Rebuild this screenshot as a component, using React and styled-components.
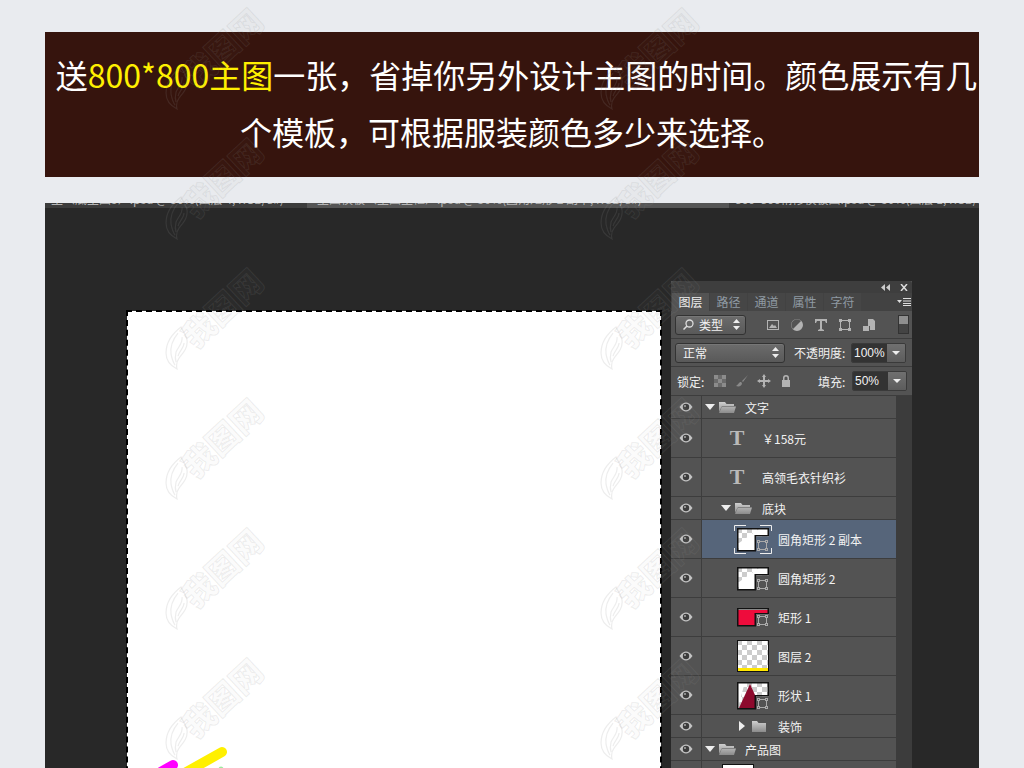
import React from 'react';
import styled, { createGlobalStyle } from 'styled-components';

const GlobalStyle = createGlobalStyle`
  html, body {
    margin: 0;
    height: 768px;
    overflow: hidden;
    background: #e9ebef;
  }
`;

const cjk = `"Noto Sans CJK SC", "Noto Sans", sans-serif`;

const Page = styled.div`
  position: relative;
  width: 1024px;
  height: 768px;
  overflow: hidden;
  padding: 32px 45px 0;
  box-sizing: border-box;
  font-family: ${cjk};
`;

const Banner = styled.div`
  height: 145px;
  background: #36140d;
  color: #fff;
  font-size: 32px;
  line-height: 57px;
  text-align: center;
  text-indent: 9px;
  padding-top: 14px;
  box-sizing: border-box;
`;

const Yellow = styled.span`
  color: #fff000;
`;

const Workspace = styled.div`
  margin-top: 26px;
  height: 565px;
  background: #282828;
  overflow: hidden;
`;

const TabStrip = styled.div`
  display: flex;
  height: 5px;
  background: #3c3c3c;
  overflow: hidden;
  font-size: 12px;
  line-height: 12px;
  color: #b5b5b5;
  white-space: nowrap;
`;

const DocTab = styled.div`
  width: ${(p) => p.$w}px;
  flex: none;
  background: ${(p) => (p.$active ? '#555' : 'transparent')};
  padding-left: ${(p) => p.$pad}px;
  box-sizing: border-box;
  overflow: hidden;
  margin-top: -10px;
  height: 15px;
`;

const Stage = styled.div`
  display: flex;
  align-items: flex-start;
  padding: 73px 0 0 82px;
`;

const Canvas = styled.div`
  position: relative;
  width: 534px;
  height: 500px;
  margin-top: 30px;
  background: #fff;
  flex: none;
  outline: 2px dashed #000;
  outline-offset: -1px;
`;

const Strokes = styled.svg`
  position: absolute;
  left: 0;
  top: 0;
`;

const Panel = styled.div`
  width: 241px;
  margin-left: 10px;
  flex: none;
  background: #535353;
  color: #eee;
  font-size: 12px;
`;

const PanelTop = styled.div`
  height: 12px;
  background: #3e3e3e;
  border-radius: 3px 3px 0 0;
  display: flex;
  justify-content: flex-end;
  align-items: center;
  gap: 10px;
  padding-right: 4px;
`;

const TabBar = styled.div`
  height: 18px;
  background: #424242;
  display: flex;
  align-items: stretch;
  padding-left: 1px;
`;

const PanelTab = styled.div`
  width: 37px;
  margin-right: 1px;
  text-align: center;
  line-height: 18px;
  font-size: 12px;
  color: ${(p) => (p.$active ? '#f0f0f0' : '#8f9aa3')};
  background: ${(p) => (p.$active ? '#535353' : '#464646')};
`;

const MenuIcon = styled.svg`
  margin-left: auto;
  margin-right: 1px;
  align-self: center;
`;

const ControlRow = styled.div`
  height: ${(p) => p.$h}px;
  box-sizing: border-box;
  border-bottom: 1px solid #3d3d3d;
  display: flex;
  align-items: center;
  padding-left: ${(p) => p.$pad || 4}px;
`;

const Select = styled.div`
  width: ${(p) => p.$w}px;
  height: 20px;
  box-sizing: border-box;
  border: 1px solid #333;
  border-radius: 3px;
  background: linear-gradient(#6c6c6c, #595959);
  box-shadow: inset 0 1px 0 #777;
  display: flex;
  align-items: center;
  padding: 0 5px 0 7px;
  gap: 5px;
  color: #f2f2f2;
  font-size: 12px;
`;

const SelectCaret = styled.svg`
  margin-left: auto;
`;

const FilterIcons = styled.div`
  display: flex;
  align-items: center;
  gap: 8px;
  margin-left: 19px;
`;

const FilterToggle = styled.div`
  width: 9px;
  height: 17px;
  margin-left: 21px;
  border: 1px solid #333;
  background: linear-gradient(#8e8e8e 50%, #444 50%);
`;

const Label = styled.span`
  color: #f0f0f0;
  font-size: 12px;
  margin-left: ${(p) => p.$ml || 0}px;
  width: ${(p) => p.$w}px;
  flex: none;
`;

const Field = styled.div`
  width: 55px;
  height: 20px;
  margin-left: 5px;
  display: flex;
  box-sizing: border-box;
  border: 1px solid #3a3a3a;
  border-radius: 2px;
  overflow: hidden;
`;

const FieldValue = styled.div`
  width: 35px;
  background: #333;
  color: #f2f2f2;
  font-family: "Liberation Sans", sans-serif;
  font-size: 12px;
  line-height: 18px;
  padding-left: 2px;
  box-sizing: border-box;
`;

const FieldButton = styled.div`
  flex: 1;
  background: linear-gradient(#707070, #5c5c5c);
  display: flex;
  align-items: center;
  justify-content: center;
`;

const LockIcons = styled.div`
  display: flex;
  align-items: center;
  gap: 8px;
  margin-left: 6px;
  width: 105px;
  flex: none;
`;

const LayerArea = styled.div`
  display: flex;
  background: #3c3c3c;
`;

const LayerList = styled.div`
  width: 225px;
  flex: none;
  background: #535353;
`;

const ScrollTrack = styled.div`
  flex: 1;
`;

const LayerRow = styled.div`
  height: ${(p) => p.$h}px;
  box-sizing: border-box;
  border-bottom: 1px solid #3d3d3d;
  display: flex;
  align-items: center;
  background: ${(p) => (p.$selected ? '#56657a' : 'transparent')};
`;

const EyeCell = styled.div`
  width: 30px;
  align-self: stretch;
  flex: none;
  background: #535353;
  border-right: 1px solid #3d3d3d;
  display: flex;
  align-items: center;
  justify-content: center;
`;

const LayerBody = styled.div`
  display: flex;
  align-items: center;
  padding-left: ${(p) => p.$pad}px;
  min-width: 0;
`;

const LayerName = styled.span`
  margin-left: ${(p) => p.$ml}px;
  color: #f2f2f2;
  font-size: 12px;
  white-space: nowrap;
`;

const TypeGlyph = styled.span`
  width: 22px;
  text-align: center;
  font-family: "Liberation Serif", serif;
  font-weight: 700;
  font-size: 22px;
  line-height: 22px;
  color: #b9b9b9;
`;

const WatermarkLayer = styled.div`
  position: absolute;
  inset: 0;
  pointer-events: none;
  display: grid;
  grid-template-columns: 145px 290px 145px;
  grid-auto-rows: 130px;
  margin: -10px 0 0 140px;
`;

const Mark = styled.div`
  grid-column: ${(p) => p.$col};
  width: 145px;
  height: 130px;
  display: flex;
  align-items: center;
  justify-content: center;
  gap: 0;
  transform: rotate(-43deg);
  white-space: nowrap;
`;

const MarkText = styled.span`
  font-size: 32px;
  font-weight: 900;
  line-height: 1;
  color: rgba(140, 140, 140, 0.05);
  -webkit-text-stroke: 1px rgba(140, 140, 140, 0.15);
`;

const FlameIcon = styled.svg`
  flex: none;
  transform: rotate(43deg);
`;

const Flame = () => (
  <FlameIcon width="24" height="44" viewBox="0 0 24 44" fill="none" stroke="rgba(140,140,140,.16)" strokeWidth="1.200">
    <path d="M16 1C8 7 1 16 1 27c0 8 5 13 11 16-1-4-1-7 2-11 4-5 9-10 8-18-1-5-4-9-6-13z" />
    <path d="M13 7C8 13 5 20 6 28c1 5 2 8 4 11" />
    <path d="M17 11c1 6-4 10-6 15-1 4-1 7 0 10" />
    <path d="M19 17c0 5-5 8-6 13" />
  </FlameIcon>
);

const Eye = () => (
  <svg width="14" height="10" viewBox="0 0 14 10">
    <path d="M.5 5C3 1.500 5 .5 7 .5s4 1 6.500 4.500C11 8.500 9 9.500 7 9.500S3 8.500.500 5z" fill="#c4c4c4" />
    <circle cx="7" cy="5" r="3.200" fill="#3c3c3c" />
    <circle cx="6" cy="4" r="1" fill="#aaa" />
  </svg>
);

const Folder = ({ open }) => (
  <svg width="18" height="12" viewBox="0 0 18 12" style={{ marginLeft: 3 }}>
    <defs>
      <linearGradient id="fold" x1="0" y1="0" x2="0" y2="1">
        <stop offset="0" stopColor="#cfcfcf" />
        <stop offset="1" stopColor="#8b8b8b" />
      </linearGradient>
    </defs>
    {open ? (
      <path d="M1 1h6l1.500 2H16v2H4L1 11z M4 5.500h14L16 12H1z" fill="url(#fold)" />
    ) : (
      <path d="M2 1h5l1.500 2H16v9H2z" fill="url(#fold)" />
    )}
  </svg>
);

const Arrow = ({ open }) => (
  <svg width="10" height="10" viewBox="0 0 10 10">
    {open ? <path d="M0 2h10L5 8z" fill="#eee" /> : <path d="M2 0l6 5-6 5z" fill="#eee" />}
  </svg>
);

// thumbnail heights and where the vector mask notch starts, per layer
const thumbs = {
  round: { h: 23, notch: 8 },
  red: { h: 18, notch: 6 },
  layer: { h: 32 },
  shape: { h: 27, notch: 14 },
  product: { h: 32 },
};

const Thumb = ({ kind, selected, id }) => {
  const { h, notch } = thumbs[kind];
  const bg = selected ? '#56657a' : '#535353';
  return (
    <svg width="40" height={h + 8} viewBox={`-4 -4 40 ${h + 8}`} style={{ display: 'block' }}>
      <defs>
        <pattern id={id} width="10" height="10" patternUnits="userSpaceOnUse">
          <rect width="10" height="10" fill="#fff" />
          <rect width="5" height="5" fill="#ccc" />
          <rect x="5" y="5" width="5" height="5" fill="#ccc" />
        </pattern>
      </defs>
      <rect width="32" height={h} fill={kind === 'product' ? '#fff' : `url(#${id})`} />
      {kind === 'round' && <path d={`M2 ${h}V15L22 1h10v${notch - 1}H18v${h - notch}z`} fill="#fff" />}
      {kind === 'red' && (
        <>
          <rect width="32" height={h} fill="#fff" />
          <rect x="1" y="2" width="30" height="4" fill="#ee0c3c" />
          <rect x="1" y="2" width="17" height={h - 3} fill="#ee0c3c" />
        </>
      )}
      {kind === 'shape' && (
        <>
          <path d="M0 0h8L2 22v5H0z" fill="#fff" />
          <path d="M2 26L13 2l5 11v13z" fill="#8d0a2d" />
        </>
      )}
      {kind === 'layer' && <rect x="1" y={h - 4} width="30" height="3" fill="#ffe600" />}
      {notch ? (
        <>
          <path d={`M.75.750h30.500v${notch - 1}H18.250v${h - notch}H.750z`} fill="none" stroke="#111" strokeWidth="1.500" />
          <rect x="19" y={notch + 0.5} width="13" height={h - notch} fill={bg} />
          <g fill={bg} stroke="#aaa">
            <rect x="21.500" y={h - 9.5} width="8" height="8" fill="none" />
            <rect x="20.500" y={h - 10.5} width="2" height="2" />
            <rect x="28.500" y={h - 10.5} width="2" height="2" />
            <rect x="20.500" y={h - 2.5} width="2" height="2" />
            <rect x="28.500" y={h - 2.5} width="2" height="2" />
          </g>
        </>
      ) : (
        <rect x=".500" y=".500" width="31" height={h - 1} fill="none" stroke="#111" />
      )}
      {selected && (
        <path
          d={`M9-2.500H-2.500V3M23-2.500h11.500V3M9 ${h + 2.5}H-2.500V${h - 3}M23 ${h + 2.5}h11.500V${h - 3}`}
          fill="none"
          stroke="#eee"
        />
      )}
    </svg>
  );
};

const TinyIcon = ({ d, w = 14, h = 14, fill = '#b3b3b3' }) => (
  <svg width={w} height={h} viewBox="0 0 14 14">
    <path d={d} fill={fill} fillRule="evenodd" />
  </svg>
);

const CheckerIcon = () => (
  <svg width="14" height="14" viewBox="0 0 14 14">
    <rect x="1" y="1" width="12" height="12" fill="#6b6b6b" />
    <path d="M1 1h4v4H1zM9 1h4v4H9zM5 5h4v4H5zM1 9h4v4H1zM9 9h4v4H9z" fill="#8c8c8c" />
  </svg>
);

const Updown = () => (
  <SelectCaret width="7" height="11" viewBox="0 0 7 11">
    <path d="M0 4l3.500-4L7 4zM0 7l3.500 4L7 7z" fill="#eee" />
  </SelectCaret>
);

const DownCaret = () => (
  <svg width="8" height="4" viewBox="0 0 8 4">
    <path d="M0 0h8L4 4z" fill="#eee" />
  </svg>
);

const layers = [
  { h: 23, type: 'group', depth: 0, open: true, name: '文字' },
  { h: 39, type: 'text', name: '￥158元' },
  { h: 39, type: 'text', name: '高领毛衣针织衫' },
  { h: 23, type: 'group', depth: 1, open: true, name: '底块' },
  { h: 39, type: 'thumb', kind: 'round', selected: true, name: '圆角矩形 2 副本' },
  { h: 39, type: 'thumb', kind: 'round', name: '圆角矩形 2' },
  { h: 39, type: 'thumb', kind: 'red', name: '矩形 1' },
  { h: 39, type: 'thumb', kind: 'layer', name: '图层 2' },
  { h: 39, type: 'thumb', kind: 'shape', name: '形状 1' },
  { h: 23, type: 'group', depth: 2, open: false, name: '装饰' },
  { h: 23, type: 'group', depth: 0, open: true, name: '产品图' },
  { h: 39, type: 'thumb', kind: 'product', pad: 20, name: '' },
];

const groupPad = [3, 19, 35];
const groupGap = [9, 10, 10];

const Layer = ({ layer, index }) => (
  <LayerRow $h={layer.h} $selected={layer.selected}>
    <EyeCell>
      <Eye />
    </EyeCell>
    {layer.type === 'group' && (
      <LayerBody $pad={groupPad[layer.depth]}>
        <Arrow open={layer.open} />
        <Folder open={layer.open} />
        <LayerName $ml={groupGap[layer.depth]}>{layer.name}</LayerName>
      </LayerBody>
    )}
    {layer.type === 'text' && (
      <LayerBody $pad={24}>
        <TypeGlyph>T</TypeGlyph>
        <LayerName $ml={14}>{layer.name}</LayerName>
      </LayerBody>
    )}
    {layer.type === 'thumb' && (
      <LayerBody $pad={(layer.pad || 35) - 4}>
        <Thumb kind={layer.kind} selected={layer.selected} id={`chk-${index}`} />
        <LayerName $ml={5}>{layer.name}</LayerName>
      </LayerBody>
    )}
  </LayerRow>
);

const markRows = [0, 1, 2, 3, 4, 5];

export default function App() {
  return (
    <Page>
      <GlobalStyle />
      <Banner>
        送<Yellow>800*800主图</Yellow>一张，省掉你另外设计主图的时间。颜色展示有几个模板，可根据服装颜色多少来选择。
      </Banner>
      <Workspace>
        <TabStrip>
          <DocTab $w={262} $pad={6}>主（底主图5）.psd @ 50%(图层 4, RGB/8#) *</DocTab>
          <DocTab $w={422} $pad={10} $active>主图模板（主图主框）.psd @ 50%(圆角矩形 2 副本, RGB/8#) *</DocTab>
          <DocTab $w={250} $pad={6}>800*800精修模板图.psd @ 50%(图层 1, RGB/8#)</DocTab>
        </TabStrip>
        <Stage>
          <Canvas>
            <Strokes width="534" height="500" viewBox="0 0 534 500">
              <path d="M95 441L40 472" stroke="#fff000" strokeWidth="10" strokeLinecap="round" />
              <path d="M46 454L18 470" stroke="#ff00ff" strokeWidth="10" strokeLinecap="round" />
              <circle cx="94" cy="458" r="2.500" fill="#9de99d" />
            </Strokes>
          </Canvas>
          <Panel>
            <PanelTop>
              <svg width="9" height="7" viewBox="0 0 9 7">
                <path d="M4 0v7L0 3.500zM9 0v7L5 3.500z" fill="#ccc" />
              </svg>
              <svg width="8" height="7" viewBox="0 0 8 7">
                <path d="M1 0l6 7M7 0L1 7" stroke="#ddd" strokeWidth="1.500" />
              </svg>
            </PanelTop>
            <TabBar>
              <PanelTab $active>图层</PanelTab>
              <PanelTab>路径</PanelTab>
              <PanelTab>通道</PanelTab>
              <PanelTab>属性</PanelTab>
              <PanelTab>字符</PanelTab>
              <MenuIcon width="14" height="8" viewBox="0 0 14 8">
                <path d="M0 2h5L2.500 5zM6 0h8v1H6zM6 2.500h8v1H6zM6 5h8v1H6zM6 7h8v1H6z" fill="#ddd" />
              </MenuIcon>
            </TabBar>
            <ControlRow $h={28}>
              <Select $w={71}>
                <svg width="11" height="11" viewBox="0 0 11 11">
                  <circle cx="6.500" cy="4.500" r="3.500" fill="none" stroke="#ddd" strokeWidth="1.300" />
                  <path d="M4 7L.5 10.500" stroke="#ddd" strokeWidth="1.500" />
                </svg>
                类型
                <Updown />
              </Select>
              <FilterIcons>
                <TinyIcon w={16} d="M1 2h12v10H1zM2 3v8h10V3zM3 10l3-4 2 2 1-1 2 3z" />
                <TinyIcon w={16} d="M7 1a6 6 0 1 0 0 12A6 6 0 0 0 7 1zM3 11L11 3a5 5 0 0 0-8 8z" />
                <TinyIcon w={16} d="M1 1h12v4h-1l-1-2H8v8l2 1v1H4v-1l2-1V3H3L2 5H1z" />
                <TinyIcon w={16} d="M1 1h3v1h6V1h3v3h-1v6h1v3h-3v-1H4v1H1v-3h1V4H1zM4 3v1H3v6h1v1h6v-1h1V4h-1V3z" />
                <TinyIcon w={16} d="M6 1h5l2 2v9H8V8H6zM1 8h6v5H1z" />
              </FilterIcons>
              <FilterToggle />
            </ControlRow>
            <ControlRow $h={28}>
              <Select $w={110}>
                正常
                <Updown />
              </Select>
              <Label $ml={9} $w={52}>不透明度:</Label>
              <Field>
                <FieldValue>100%</FieldValue>
                <FieldButton>
                  <DownCaret />
                </FieldButton>
              </Field>
            </ControlRow>
            <ControlRow $h={29} $pad={6}>
              <Label $w={30}>锁定:</Label>
              <LockIcons>
                <CheckerIcon />
                <TinyIcon d="M13 1L7 7l1 1zM6 8c-2 0-2 2-5 4 3 1 6 0 6-3z" fill="#8a8a8a" />
                <TinyIcon d="M7 0l2 3H8v3h3V5l3 2-3 2V8H8v3h1l-2 3-2-3h1V8H3v1L0 7l3-2v1h3V3H5z" />
                <TinyIcon d="M4 6V4a3 3 0 0 1 6 0v2h1v7H3V6zM5.500 6h3V4a1.500 1.500 0 0 0-3 0z" />
              </LockIcons>
              <Label $w={29}>填充:</Label>
              <Field>
                <FieldValue>50%</FieldValue>
                <FieldButton>
                  <DownCaret />
                </FieldButton>
              </Field>
            </ControlRow>
            <LayerArea>
              <LayerList>
                {layers.map((layer, i) => (
                  <Layer key={i} layer={layer} index={i} />
                ))}
              </LayerList>
              <ScrollTrack />
            </LayerArea>
          </Panel>
        </Stage>
      </Workspace>
      <WatermarkLayer>
        {markRows.map((r) => (
          <React.Fragment key={r}>
            <Mark $col={1}>
              <Flame />
              <MarkText>我图网</MarkText>
            </Mark>
            <Mark $col={3}>
              <Flame />
              <MarkText>我图网</MarkText>
            </Mark>
          </React.Fragment>
        ))}
      </WatermarkLayer>
    </Page>
  );
}
